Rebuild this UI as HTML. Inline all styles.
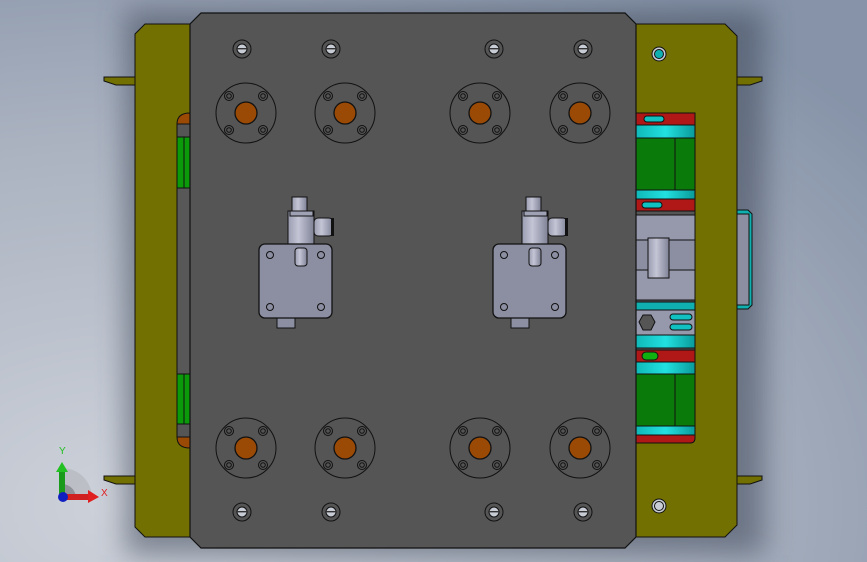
<!DOCTYPE html>
<html><head><meta charset="utf-8"><style>
html,body{margin:0;padding:0;width:867px;height:562px;overflow:hidden}
svg{display:block}
</style></head><body>
<svg width="867" height="562" viewBox="0 0 867 562" xmlns="http://www.w3.org/2000/svg">
<defs>
<radialGradient id="bg" cx="0.15" cy="0.9" r="1.1">
<stop offset="0" stop-color="#ced2da"/><stop offset="0.6" stop-color="#aab2c0"/><stop offset="1" stop-color="#8693a8"/>
</radialGradient>
<filter id="blur" x="-20%" y="-20%" width="140%" height="140%"><feGaussianBlur stdDeviation="14"/></filter>
<linearGradient id="cyl" x1="0" x2="1"><stop offset="0" stop-color="#9a9cb0"/><stop offset="0.4" stop-color="#c4c6d6"/><stop offset="1" stop-color="#7f8196"/></linearGradient>
<linearGradient id="cyan" x1="0" x2="1"><stop offset="0" stop-color="#0fb8b8"/><stop offset="0.5" stop-color="#22e0e0"/><stop offset="1" stop-color="#0a9a9a"/></linearGradient>
<g id="fl">
<circle r="30" fill="none" stroke="#111" stroke-width="1"/>
<circle r="11" fill="#9a4a05" stroke="#111" stroke-width="1.3"/>
<g fill="none" stroke="#111" stroke-width="1">
<circle cx="-17" cy="-17" r="4.5"/><circle cx="-17" cy="-17" r="2.3"/>
<circle cx="17" cy="-17" r="4.5"/><circle cx="17" cy="-17" r="2.3"/>
<circle cx="-17" cy="17" r="4.5"/><circle cx="-17" cy="17" r="2.3"/>
<circle cx="17" cy="17" r="4.5"/><circle cx="17" cy="17" r="2.3"/>
</g></g>
<g id="sc">
<circle r="9" fill="none" stroke="#111"/>
<circle r="5" fill="#c8ccd4" stroke="#111"/>
<rect x="-5" y="-1" width="10" height="1.4" fill="#333"/>
</g>
<g id="valve">
<rect x="33" y="-47" width="15" height="14" fill="url(#cyl)" stroke="#111"/>
<rect x="29" y="-33" width="26" height="33" fill="url(#cyl)" stroke="#111"/>
<rect x="31" y="-33" width="23" height="5" fill="#9fa1b5" stroke="#111"/>
<rect x="55" y="-26" width="19" height="18" rx="4" fill="url(#cyl)" stroke="#111"/>
<rect x="72" y="-26" width="3" height="18" fill="#111"/>
<rect x="18" y="74" width="18" height="10" fill="#8c8ea2" stroke="#111"/>
<rect x="0" y="0" width="73" height="74" rx="6" fill="#8c8ea2" stroke="#111" stroke-width="1.3"/>
<rect x="36" y="4" width="12" height="18" rx="3" fill="url(#cyl)" stroke="#111"/>
<g fill="none" stroke="#111"><circle cx="11" cy="11" r="3.5"/><circle cx="62" cy="11" r="3.5"/><circle cx="11" cy="63" r="3.5"/><circle cx="62" cy="63" r="3.5"/></g>
</g>
</defs>
<rect width="867" height="562" fill="url(#bg)"/>
<rect x="125" y="10" width="640" height="545" fill="#3c4658" opacity="0.55" filter="url(#blur)"/>
<!-- tabs -->
<g fill="#727000" stroke="#111" stroke-width="1">
<polygon points="104,77 135,77 135,85 116,85 104,81"/>
<polygon points="104,476 135,476 135,484 116,484 104,480"/>
<polygon points="737,77 762,77 762,81 750,85 737,85"/>
<polygon points="737,476 762,476 762,480 750,484 737,484"/>
<polygon points="145,24 190,24 190,537 145,537 135,527 135,34"/>
<polygon points="636,24 725,24 737,36 737,525 725,537 636,537"/>
</g>
<!-- right small plate -->
<path d="M737,210 L748,210 L752,214 L752,305 L748,309 L737,309 Z" fill="#0fb0b0" stroke="#111"/>
<rect x="737" y="214" width="12" height="91" fill="#8c8ea2" stroke="#111"/>
<!-- left strip -->
<g stroke="#111" stroke-width="1">
<path d="M177,124 Q177,113 190,113 L190,124 Z" fill="#9a4a05"/>
<rect x="177" y="124" width="13" height="13" fill="#555"/>
<rect x="177" y="137" width="13" height="51" fill="#0a9a0a"/>
<line x1="184" y1="137" x2="184" y2="188"/>
<rect x="177" y="188" width="13" height="186" fill="#585858"/>
<rect x="177" y="374" width="13" height="50" fill="#0a9a0a"/>
<line x1="184" y1="374" x2="184" y2="424"/>
<rect x="177" y="424" width="13" height="13" fill="#555"/>
<path d="M177,437 L190,437 L190,448 Q177,448 177,437 Z" fill="#9a4a05"/>
</g>
<!-- right mechanism -->
<g stroke="#111" stroke-width="1">
<path d="M636,113 L690,113 Q695,113 695,120 L695,436 Q695,443 690,443 L636,443 Z" fill="#555"/>
<rect x="636" y="113" width="59" height="12" fill="#b01818"/>
<rect x="644" y="116" width="20" height="6" rx="3" fill="#11c0c0"/>
<rect x="636" y="125" width="59" height="13" fill="url(#cyan)"/>
<rect x="636" y="138" width="59" height="52" fill="#0a7a0a"/>
<line x1="675" y1="138" x2="675" y2="190"/>
<rect x="636" y="190" width="59" height="9" fill="url(#cyan)"/>
<rect x="636" y="199" width="59" height="12" fill="#b01818"/>
<rect x="642" y="202" width="20" height="6" rx="3" fill="#11c0c0"/>
<rect x="636" y="215" width="59" height="85" fill="#9698ac"/>
<rect x="636" y="240" width="59" height="30" fill="#8c8ea2"/>
<rect x="648" y="238" width="21" height="40" fill="url(#cyl)"/>
<rect x="636" y="302" width="59" height="8" fill="#11b0b0"/>
<rect x="636" y="310" width="59" height="25" fill="#9698ac"/>
<polygon points="643,315 651,315 655,322 651,330 643,330 639,322" fill="#555"/>
<rect x="670" y="314" width="22" height="6" rx="3" fill="#11c0c0"/>
<rect x="670" y="324" width="22" height="6" rx="3" fill="#11c0c0"/>
<rect x="636" y="335" width="59" height="13" fill="url(#cyan)"/>
<rect x="636" y="350" width="59" height="12" fill="#b01818"/>
<rect x="642" y="352" width="16" height="8" rx="4" fill="#11b011"/>
<rect x="636" y="362" width="59" height="12" fill="url(#cyan)"/>
<rect x="636" y="374" width="59" height="52" fill="#0a7a0a"/>
<line x1="675" y1="374" x2="675" y2="426"/>
<rect x="636" y="426" width="59" height="9" fill="url(#cyan)"/>
<path d="M636,435 L695,435 L695,438 Q695,443 690,443 L636,443 Z" fill="#b01818"/>
</g>
<!-- right bracket screws -->
<circle cx="659" cy="54" r="7" fill="#c8ccd4" stroke="#111"/><circle cx="659" cy="54" r="4.5" fill="#11b0b0" stroke="#111"/>
<circle cx="659" cy="506" r="7" fill="#c8ccd4" stroke="#111"/><circle cx="659" cy="506" r="4.5" fill="#c8ccd4" stroke="#111"/>
<!-- main plate -->
<polygon points="201,13 625,13 636,24 636,537 625,548 201,548 190,537 190,24" fill="#555555" stroke="#111" stroke-width="1.2"/>
<use href="#fl" x="246" y="113"/><use href="#fl" x="345" y="113"/><use href="#fl" x="480" y="113"/><use href="#fl" x="580" y="113"/>
<use href="#fl" x="246" y="448"/><use href="#fl" x="345" y="448"/><use href="#fl" x="480" y="448"/><use href="#fl" x="580" y="448"/>
<use href="#sc" x="242" y="49"/><use href="#sc" x="331" y="49"/><use href="#sc" x="494" y="49"/><use href="#sc" x="583" y="49"/>
<use href="#sc" x="242" y="512"/><use href="#sc" x="331" y="512"/><use href="#sc" x="494" y="512"/><use href="#sc" x="583" y="512"/>
<use href="#valve" x="259" y="244"/><use href="#valve" x="493" y="244"/>
<!-- axis triad -->
<path d="M62,468 A30,30 0 0 1 92,498 L62,498 Z" fill="#b8bac0" opacity="0.8"/>
<path d="M62,484 A14,14 0 0 1 76,498 L62,498 Z" fill="#8f9298"/>
<rect x="59" y="470" width="6" height="28" fill="#1a9a1a"/>
<polygon points="56,472 62,462 68,472" fill="#22c022"/>
<rect x="62" y="494" width="28" height="6" fill="#d02020"/>
<polygon points="88,490 99,497 88,503" fill="#e02020"/>
<circle cx="63" cy="497" r="5" fill="#1020c0"/>
<text x="59" y="454" font-family="Liberation Sans, sans-serif" font-size="10" fill="#22c022">Y</text>
<text x="101" y="496" font-family="Liberation Sans, sans-serif" font-size="10" fill="#e02020">X</text>
</svg>
</body></html>
